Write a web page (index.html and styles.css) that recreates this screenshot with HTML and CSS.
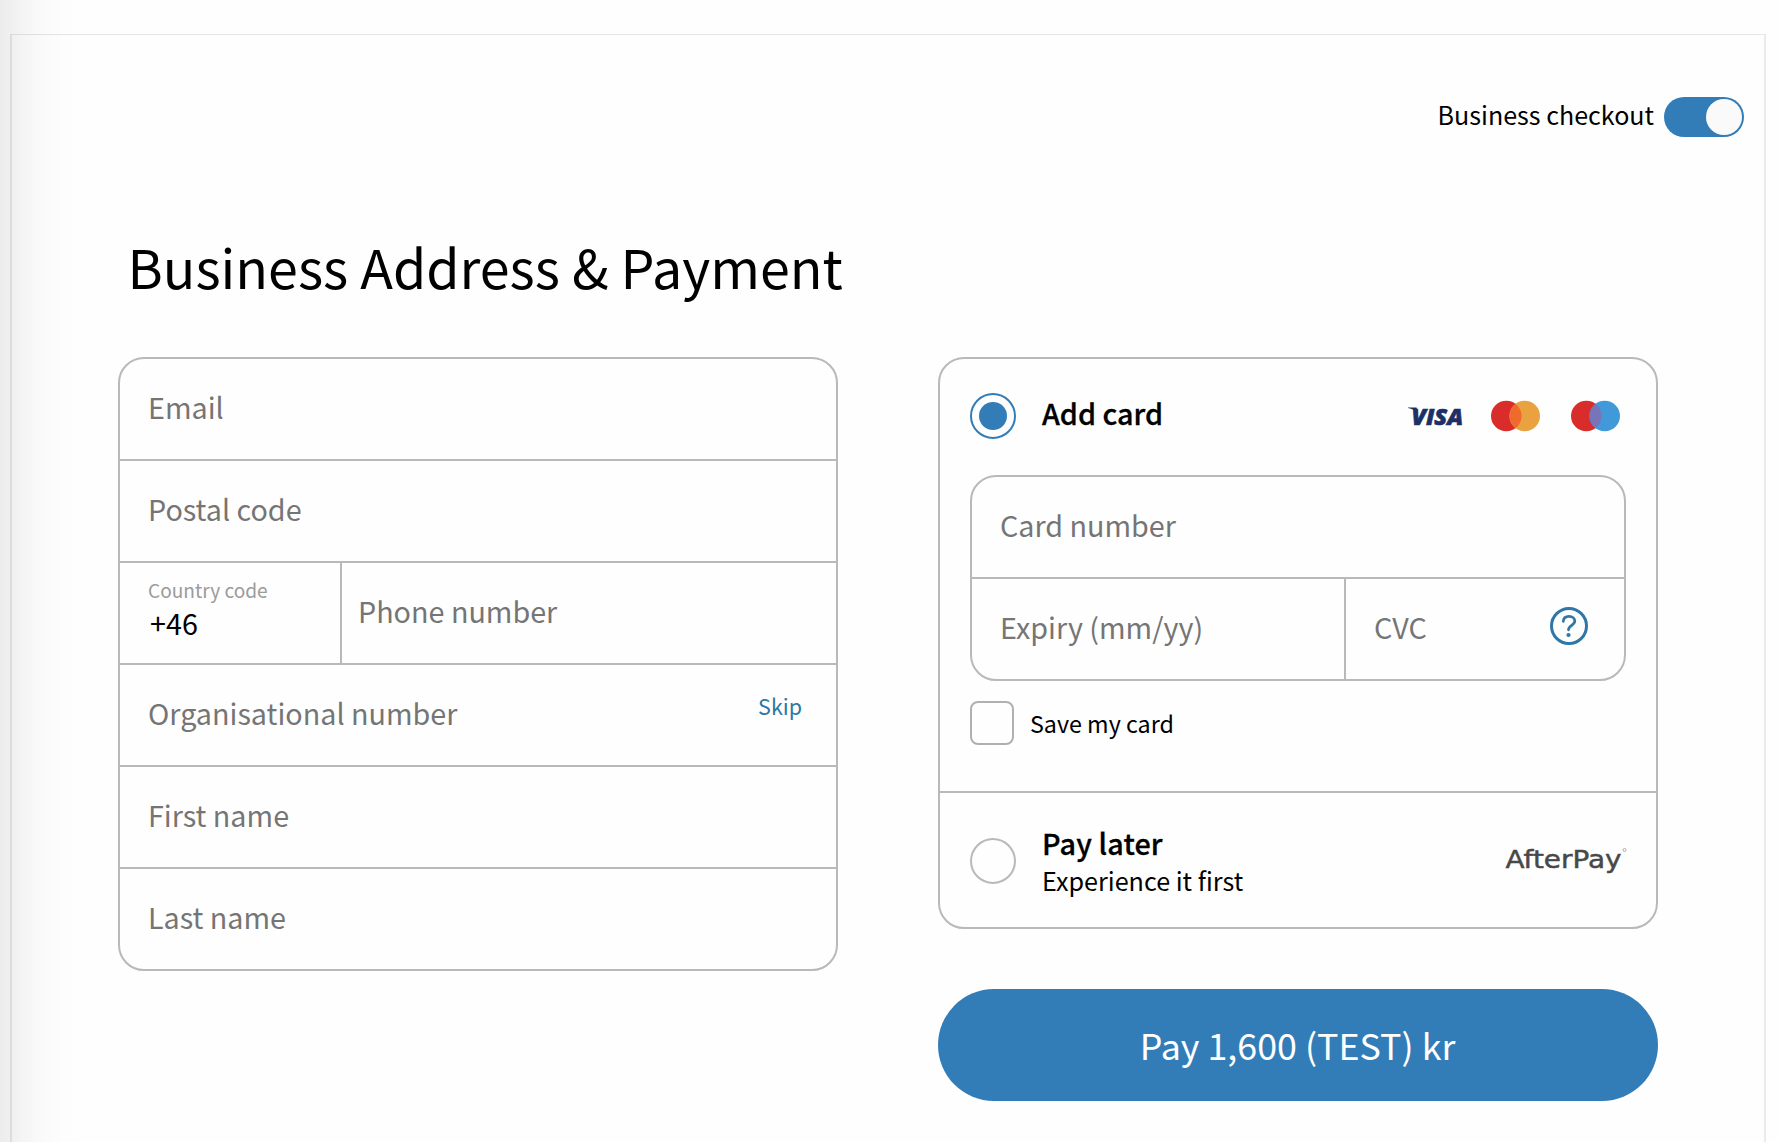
FILE: index.html
```html
<!DOCTYPE html>
<html lang="en">
<head>
<meta charset="utf-8">
<title>Business checkout</title>
<link rel="stylesheet" href="styles.css">
</head>
<body>
<main class="frame">
  <div class="mode">
    <span class="mode-label">Business checkout</span>
    <span class="switch" role="switch" aria-checked="true"><span class="knob"></span></span>
  </div>
  <h1 class="title">Business Address &amp; Payment</h1>
  <div class="columns">
    <section class="box address">
      <div class="field">Email</div>
      <div class="field">Postal code</div>
      <div class="field split">
        <div class="country">
          <span class="caption">Country code</span>
          <span class="value">+46</span>
        </div>
        <div class="phone">Phone number</div>
      </div>
      <div class="field">Organisational number <a class="skip">Skip</a></div>
      <div class="field">First name</div>
      <div class="field">Last name</div>
    </section>
    <section class="payment">
      <div class="box">
        <div class="card-method">
          <div class="method-head">
            <span class="radio on"></span>
            <span class="method-name">Add card</span>
            <span class="brands">
              <svg class="visa" width="56" height="32" viewBox="0 0 56 32">
                <path d="M0 7.500h8.500l1.800 5.500Q6 8.900 0 8z"/>
                <text x="3.500" y="24.500" textLength="51.500" lengthAdjust="spacingAndGlyphs">VISA</text>
              </svg>
              <svg width="49" height="32" viewBox="0 0 49 32">
                <circle cx="15.300" cy="16" r="15.300" fill="#d82d2b"/>
                <circle cx="33.700" cy="16" r="15.300" fill="#eaa140"/>
                <path d="M24.500 3.770a15.300 15.300 0 0 1 0 24.460a15.300 15.300 0 0 1 0-24.460z" fill="#ef6a2c"/>
              </svg>
              <svg width="49" height="32" viewBox="0 0 49 32">
                <circle cx="15.300" cy="16" r="15.300" fill="#d82d2b"/>
                <circle cx="33.700" cy="16" r="15.300" fill="#4299da"/>
                <path d="M24.500 3.770a15.300 15.300 0 0 1 0 24.460a15.300 15.300 0 0 1 0-24.460z" fill="#7774b8"/>
              </svg>
            </span>
          </div>
          <div class="box card-box">
            <div class="field">Card number</div>
            <div class="field split">
              <div class="expiry">Expiry (mm/yy)</div>
              <div class="cvc">CVC
                <svg class="help" width="38" height="38" viewBox="0 0 38 38" fill="none" stroke="#2e77a6">
                  <circle cx="19" cy="19" r="17.500" stroke-width="3"/>
                  <path d="M13.300 14.300C13.500 11 15.700 9.400 19 9.400C22.600 9.400 24.800 11.400 24.800 14.100C24.800 18.300 18.500 18.500 18.500 22.800" stroke-width="2.700" stroke-linecap="round"/>
                  <circle cx="18.500" cy="28" r="2.100" fill="#2e77a6" stroke="none"/>
                </svg>
              </div>
            </div>
          </div>
          <div class="save"><span class="check"></span>Save my card</div>
        </div>
        <div class="later-method">
          <span class="radio"></span>
          <div class="later-text">
            <span class="method-name">Pay later</span>
            <span class="note">Experience it first</span>
          </div>
          <svg class="afterpay" width="124" height="44" viewBox="-2 -8 124 44">
            <text x="-0.500" y="21" textLength="116" lengthAdjust="spacingAndGlyphs">AfterPay</text>
            <circle cx="118.500" cy="3" r="1.500"/>
          </svg>
        </div>
      </div>
      <button class="pay">Pay 1,600 (TEST) kr</button>
    </section>
  </div>
</main>
</body>
</html>
```
FILE: styles.css
```css
* { box-sizing: border-box; }

body {
  margin: 0;
  height: 1142px;
  overflow: hidden;
  padding: 34px 12px 0 10px;
  background: linear-gradient(90deg, #ececec 0, #efefef 10px, #f5f5f5 24px, #fafafa 42px, #fdfdfd 62px, #fefefe 84px);
  color: #000;
  font-family: "Noto Sans CJK SC", "Noto Sans", sans-serif;
  font-size: 28.720px;
}

.frame {
  height: 1120px;
  border: 2px solid rgba(0, 0, 0, .08);
  border-top: 1px solid rgba(0, 0, 0, .09);
}

.mode {
  display: flex;
  justify-content: flex-end;
  align-items: center;
  gap: 10px;
  height: 40px;
  margin: 62px 20px 0 0;
}
.mode-label { font-size: 25.070px; line-height: 34px; padding-bottom: 6px; }
.switch {
  display: flex;
  justify-content: flex-end;
  width: 80px;
  height: 40px;
  padding: 2px;
  border-radius: 20px;
  background: #327db7;
}
.knob { width: 36px; height: 36px; border-radius: 50%; background: #fafafa; }

.title {
  margin: 99px 0 61px 115.500px;
  font-size: 53.740px;
  font-weight: 400;
  line-height: 60px;
}

.columns {
  display: grid;
  grid-template-columns: 720px 720px;
  gap: 100px;
  align-items: start;
  margin-left: 106px;
}

.box { border: 2px solid #b9b9b9; border-radius: 26px; }

.field {
  display: flex;
  align-items: center;
  height: 102px;
  padding: 0 28px 5px;
  border-bottom: 2px solid #b9b9b9;
  color: #757575;
}
.field:last-child { height: 100px; border-bottom: 0; }
.field.split { padding: 0; align-items: stretch; }

.country {
  display: flex;
  flex-direction: column;
  width: 222px;
  padding: 15px 0 0 28px;
  border-right: 2px solid #b9b9b9;
}
.caption { font-size: 19.100px; line-height: 24px; color: #9b9b9b; }
.value { margin: 5px 0 0 2px; line-height: 32px; color: #000; }
.phone { display: flex; align-items: center; padding: 0 0 5px 16px; }
.skip {
  margin-left: auto;
  padding: 0 6px 14px 0;
  font-size: 21.490px;
  color: #2e77a6;
}

.card-method { padding: 34px 30px 46px; border-bottom: 2px solid #b9b9b9; }
.method-head { display: flex; align-items: center; height: 46px; }
.radio {
  display: flex;
  width: 46px;
  height: 46px;
  margin-right: 26px;
  border: 2px solid #b9b9b9;
  border-radius: 50%;
}
.radio.on { border-color: #327db7; }
.radio.on::before {
  content: "";
  width: 28px;
  height: 28px;
  margin: auto;
  border-radius: 50%;
  background: #327db7;
}
.method-name { font-weight: 500; line-height: 36px; -webkit-text-stroke: .3px #000; }
.method-head .method-name { padding-bottom: 7px; }

.brands { display: flex; align-items: center; margin: 0 6px 1px auto; }
.brands svg + svg { margin-left: 27px; }
.brands svg + svg + svg { margin-left: 31px; }
.visa {
  fill: #1c2f66;
  stroke: #1c2f66;
  stroke-width: .7px;
  font: italic 800 23.500px "Open Sans", sans-serif;
}
.visa path { stroke: none; }

.card-box { margin-top: 36px; }
.expiry, .cvc { display: flex; align-items: center; padding: 0 28px 5px; }
.expiry { width: 374px; border-right: 2px solid #b9b9b9; }
.cvc { flex: 1; padding-right: 36px; }
.help { margin: 0 0 2px auto; }

.save { display: flex; align-items: center; gap: 16px; height: 44px; margin-top: 20px; font-size: 23.280px; }
.check { width: 44px; height: 44px; border: 2px solid #b0b0b0; border-radius: 8px; }

.later-method { display: flex; align-items: center; height: 134px; padding: 2px 28px 0 30px; }
.later-text { display: flex; flex-direction: column; gap: 1px; padding-top: 1px; }
.later-text .method-name { letter-spacing: .15px; }
.note { font-size: 25.150px; line-height: 36px; }
.afterpay {
  margin: 0 0 0 auto;
  fill: #484848;
  stroke: #484848;
  stroke-width: .5px;
  stroke-linejoin: round;
  font: 25.500px "DejaVu Sans", sans-serif;
  font-variant-ligatures: none;
}
.afterpay circle { fill: none; stroke: #999; stroke-width: .8px; }

.pay {
  display: block;
  width: 720px;
  height: 112px;
  margin-top: 60px;
  padding: 0 1px 3px 0;
  border: 0;
  border-radius: 56px;
  background: #327db7;
  color: #fff;
  font-family: inherit;
  font-size: 35.810px;
}
```
